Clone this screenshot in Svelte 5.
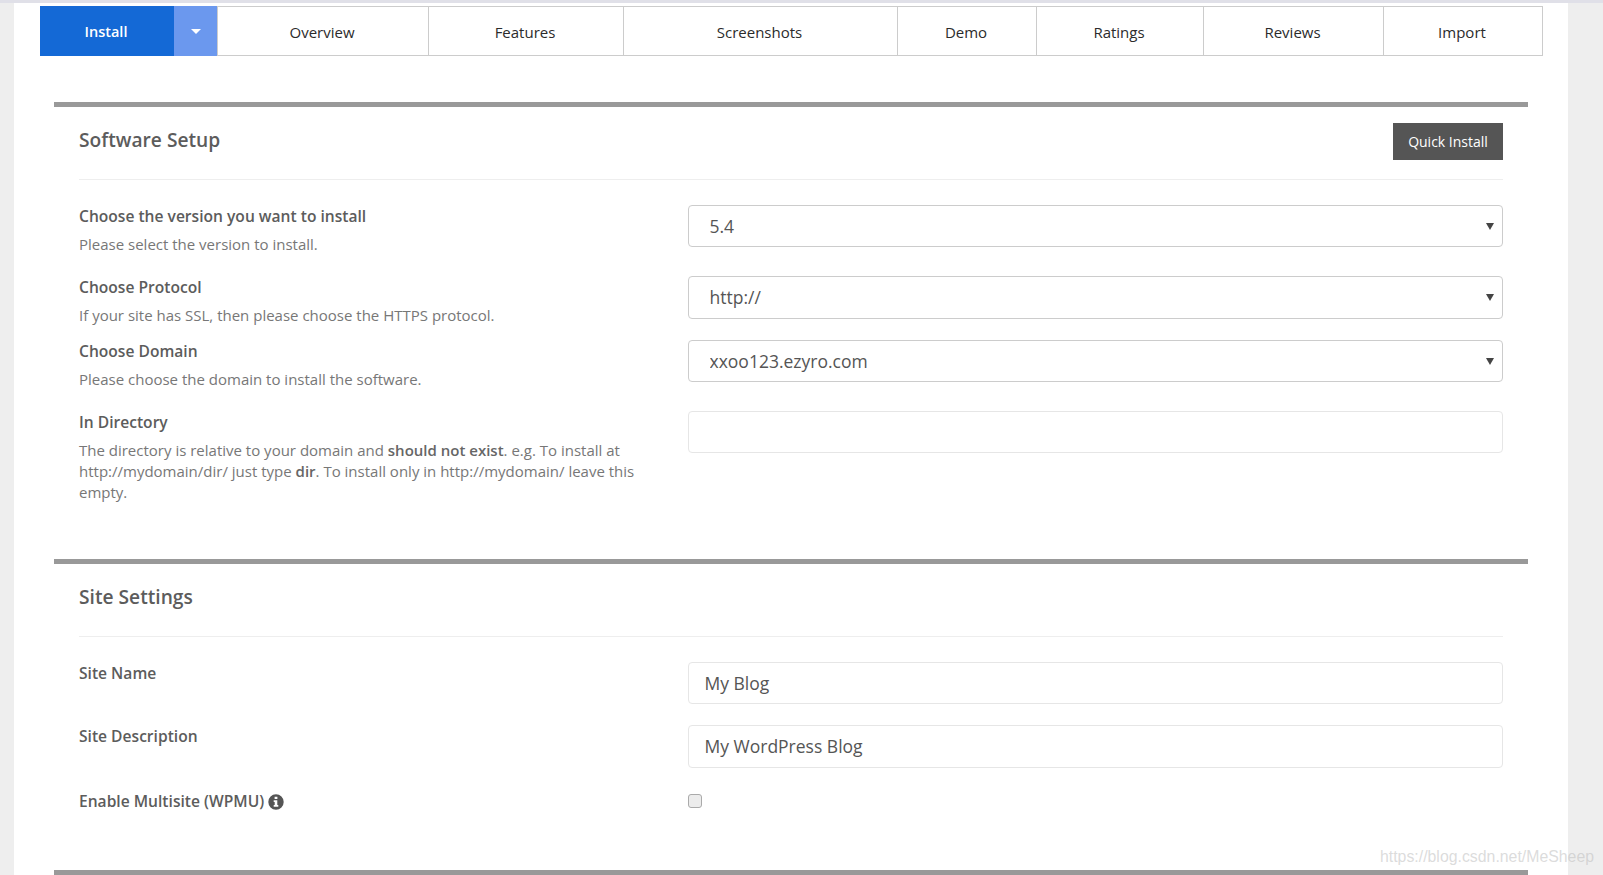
<script lang="ts">
  const tabs = [
    { label: "Overview", width: 211 },
    { label: "Features", width: 195 },
    { label: "Screenshots", width: 274 },
    { label: "Demo", width: 139 },
    { label: "Ratings", width: 167 },
    { label: "Reviews", width: 180 },
    { label: "Import", width: 159 },
  ];
</script>

<div class="page">
  <nav class="tabs">
    <button class="tab install">Install</button>
    <button class="tab caret" aria-label="More install options"><span class="caret-icon"></span></button>
    {#each tabs as tab}
      <button class="tab" style="width: {tab.width}px">{tab.label}</button>
    {/each}
  </nav>

  <section class="panel first">
    <header class="panel-head">
      <h2>Software Setup</h2>
      <button class="quick">Quick Install</button>
    </header>

    <div class="row r-version">
      <div class="info">
        <label for="version">Choose the version you want to install</label>
        <p>Please select the version to install.</p>
      </div>
      <div class="select"><select id="version"><option>5.4</option></select></div>
    </div>

    <div class="row r-protocol">
      <div class="info">
        <label for="protocol">Choose Protocol</label>
        <p>If your site has SSL, then please choose the HTTPS protocol.</p>
      </div>
      <div class="select tall"><select id="protocol"><option>http://</option></select></div>
    </div>

    <div class="row r-domain">
      <div class="info">
        <label for="domain">Choose Domain</label>
        <p>Please choose the domain to install the software.</p>
      </div>
      <div class="select"><select id="domain"><option>xxoo123.ezyro.com</option></select></div>
    </div>

    <div class="row r-dir">
      <div class="info">
        <label for="dir">In Directory</label>
        <p>
          The directory is relative to your domain and <b>should not exist</b>. e.g. To install at
          http://mydomain/dir/ just type <b>dir</b>. To install only in http://mydomain/ leave this
          empty.
        </p>
      </div>
      <input id="dir" class="text" type="text" />
    </div>
  </section>

  <section class="panel second">
    <header class="panel-head">
      <h2>Site Settings</h2>
    </header>

    <div class="row r-name">
      <div class="info"><label for="site-name">Site Name</label></div>
      <input id="site-name" class="text" type="text" value="My Blog" />
    </div>

    <div class="row r-desc">
      <div class="info"><label for="site-desc">Site Description</label></div>
      <input id="site-desc" class="text tall" type="text" value="My WordPress Blog" />
    </div>

    <div class="row r-multi">
      <div class="info">
        <label for="multi">Enable Multisite (WPMU)</label>
        <svg class="info-icon" viewBox="0 0 16 16" aria-hidden="true">
          <path
            fill-rule="evenodd"
            d="M8 .3a7.7 7.7 0 1 1 0 15.4A7.7 7.7 0 0 1 8 .3zM6.6 2.7v2.4h2.8V2.7zM5.7 6.3v1.6h1v3.2h-1v1.7h4.6v-1.7h-1V6.3z"
          />
        </svg>
      </div>
      <input id="multi" class="check" type="checkbox" />
    </div>
  </section>

  <section class="panel last"></section>
</div>

<div class="watermark">https://blog.csdn.net/MeSheep</div>

<style>
  :global(body) {
    background: #eeeeee;
    overflow: hidden;
    height: 875px;
    font-family: "Open Sans", "Noto Sans", sans-serif;
  }

  .page {
    box-sizing: border-box;
    margin-left: 14px;
    width: 1554px;
    height: 875px;
    padding-top: 6px;
    background: #fff;
    overflow: hidden;
  }

  :global(#app)::before {
    content: "";
    display: block;
    height: 3px;
    margin-bottom: -3px;
    position: relative;
    z-index: 1;
    background: #e0e0e8;
  }

  .tabs {
    display: flex;
    margin-left: 26px;
    height: 50px;
  }

  .tab {
    box-sizing: border-box;
    height: 50px;
    padding: 1px 2px 0 0;
    margin: 0;
    border: 1px solid #ccc;
    border-left: 0;
    background: #fff;
    color: #2b2b2b;
    font: 500 15px "Open Sans", sans-serif;
  }

  .tab.install {
    width: 134px;
    background: #1469d6;
    border: 0;
    color: #fff;
    font-size: 14.5px;
    font-weight: 600;
  }

  .tab.caret {
    width: 44px;
    display: flex;
    align-items: center;
    justify-content: center;
    padding: 0;
    background: #6b98ee;
    border: 0;
    border-right: 1px solid #ccc;
  }

  .caret-icon {
    width: 0;
    height: 0;
    border-left: 5px solid transparent;
    border-right: 5px solid transparent;
    border-top: 5px solid #fff;
    margin-top: 1px;
  }

  .panel {
    margin: 0 40px;
    padding: 0 25px;
    border-top: 5px solid #999;
  }

  .panel.first {
    margin-top: 46px;
    height: 452px;
  }

  .panel.second {
    height: 306px;
  }

  .panel-head {
    display: flex;
    align-items: center;
    justify-content: space-between;
    box-sizing: border-box;
    height: 73px;
    padding-bottom: 7px;
    margin-bottom: 25px;
    border-bottom: 1px solid #eee;
  }

  h2 {
    margin: 0;
    font-size: 19.2px;
    font-weight: 600;
    color: #5c5c5c;
  }

  .quick {
    width: 110px;
    height: 37px;
    margin-top: 4px;
    padding: 0;
    border: 0;
    background: #555;
    color: #fff;
    font: 400 14px "Open Sans", sans-serif;
  }

  .row {
    display: grid;
    grid-template-columns: 609px 815px;
    align-items: start;
  }

  .r-version {
    height: 71px;
  }
  .r-protocol {
    height: 64px;
  }
  .r-domain {
    height: 71px;
  }
  .r-name {
    height: 63px;
  }
  .r-desc {
    height: 65px;
  }

  .info {
    display: block;
  }

  label {
    display: inline-block;
    font-size: 15.6px;
    font-weight: 600;
    line-height: 22px;
    color: #5c5c5c;
  }

  p {
    margin: 7px 0 0;
    width: 570px;
    font-size: 15px;
    line-height: 21px;
    color: #777;
  }

  p b {
    font-weight: 600;
    color: #666;
  }

  .select {
    position: relative;
  }

  .select::after {
    content: "";
    position: absolute;
    right: 9px;
    top: 18px;
    border-left: 4px solid transparent;
    border-right: 4px solid transparent;
    border-top: 7px solid #444;
    pointer-events: none;
  }

  select {
    display: block;
    box-sizing: border-box;
    width: 100%;
    height: 42px;
    padding: 0 0 1px 20.5px;
    appearance: none;
    background: #fff;
    border: 1px solid #ccc;
    border-radius: 4px;
    color: #555;
    font: 400 17.5px "Open Sans", sans-serif;
  }

  .select.tall select {
    height: 43px;
  }

  .text {
    display: block;
    box-sizing: border-box;
    width: 100%;
    height: 42px;
    padding: 0 15.5px 1px;
    border: 1px solid #e6e6e6;
    border-radius: 4px;
    background: #fff;
    color: #555;
    font: 400 17.5px "Open Sans", sans-serif;
  }

  .text.tall {
    height: 43px;
  }

  .info-icon {
    width: 16px;
    height: 16px;
    fill: #555;
    vertical-align: -3px;
  }

  .check {
    box-sizing: border-box;
    width: 14px;
    height: 14px;
    margin: 4px 0 0;
    appearance: none;
    background: #ececec;
    border: 1px solid #aaa;
    border-radius: 3px;
  }

  .watermark {
    position: absolute;
    left: 1380px;
    top: 845px;
    font: 400 15.85px/24px "Liberation Sans", Arial, sans-serif;
    color: rgba(190, 190, 190, 0.55);
    white-space: nowrap;
  }
</style>
